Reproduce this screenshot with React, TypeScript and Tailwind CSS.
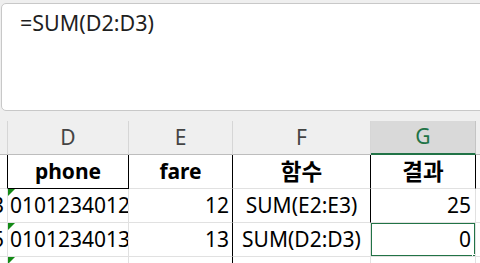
import React from "react";

const cellBase = "h-[34px] border-b border-r flex items-center shrink-0 overflow-hidden whitespace-nowrap";

function Tri() {
  return (
    <svg className="absolute left-0 top-0" width="7" height="7" viewBox="0 0 7 7">
      <polygon points="0,0 7,0 0,7" fill="#138a16" />
    </svg>
  );
}

export default function App() {
  return (
    <div className="w-[480px] h-[263px] overflow-hidden bg-[#efefef] relative font-['Noto_Sans','Noto_Sans_CJK_KR',sans-serif] text-black">
      <div className="pt-[3px] pl-[1px]">
        <div className="h-[108px] w-[540px] bg-white border border-[#c8c8c8] rounded-[5px] pl-[18px] pt-[5px] text-[21.5px] leading-[28px] text-[#1f1f1f]">
          =SUM(D2:D3)
        </div>
      </div>
      <div className="h-[10px]" />
      {/* column headers */}
      <div className="flex text-[21px] text-[#444]">
        <div className="w-[8px] h-[34px] border-r border-b border-r-[#d6d6d6] border-b-[#bdbdbd] shrink-0" />
        <div className="w-[121px] h-[34px] border-r border-b border-r-[#d6d6d6] border-b-[#bdbdbd] shrink-0 flex items-center justify-center">D</div>
        <div className="w-[104px] h-[34px] border-r border-b border-r-[#d6d6d6] border-b-[#bdbdbd] shrink-0 flex items-center justify-center">E</div>
        <div className="w-[138px] h-[34px] border-r border-b border-r-[#d6d6d6] border-b-[#bdbdbd] shrink-0 flex items-center justify-center">F</div>
        <div className="w-[105px] h-[34px] border-r border-b-2 border-r-[#c4c4c4] border-b-[#217346] bg-[#d9d9d9] shrink-0 flex items-center justify-center text-[#217346]">G</div>
        <div className="flex-1 h-[34px] border-b border-b-[#bdbdbd]" />
      </div>
      {/* row 1 */}
      <div className="flex text-[21px] bg-white">
        <div className={`${cellBase} w-[8px] border-r-black border-b-[#e1e1e1]`} />
        <div className={`${cellBase} w-[121px] border-r-black border-b-black justify-center font-bold`}>phone</div>
        <div className={`${cellBase} w-[104px] border-r-black border-b-[#e1e1e1] justify-center font-bold`}>fare</div>
        <div className={`${cellBase} w-[138px] border-r-black border-b-[#e1e1e1] justify-center font-bold text-[22.5px]`}>함수</div>
        <div className={`${cellBase} w-[105px] border-r-black border-b-[#e1e1e1] justify-center font-bold text-[22.5px]`}>결과</div>
        <div className={`${cellBase} flex-1 border-r-0 border-b-[#e1e1e1]`} />
      </div>
      {/* row 2 */}
      <div className="flex text-[21px] bg-white">
        <div className={`${cellBase} w-[8px] border-r-[#e1e1e1] border-b-[#e1e1e1] justify-end pr-[3px]`}>3</div>
        <div className={`${cellBase} w-[121px] border-r-[#e1e1e1] border-b-[#e1e1e1] pl-[2px] relative`}><Tri />0101234012</div>
        <div className={`${cellBase} w-[104px] border-r-black border-b-[#e1e1e1] justify-end pr-[3px]`}>12</div>
        <div className={`${cellBase} w-[138px] border-r-black border-b-[#e1e1e1] justify-center`}>SUM(E2:E3)</div>
        <div className={`${cellBase} w-[105px] border-r-[#e1e1e1] border-b-[#e1e1e1] justify-end pr-[4px]`}>25</div>
        <div className={`${cellBase} flex-1 border-r-0 border-b-[#e1e1e1]`} />
      </div>
      {/* row 3 */}
      <div className="flex text-[21px] bg-white">
        <div className={`${cellBase} w-[8px] border-r-[#e1e1e1] border-b-[#e1e1e1] justify-end pr-[3px]`}>5</div>
        <div className={`${cellBase} w-[121px] border-r-[#e1e1e1] border-b-[#e1e1e1] pl-[2px] relative`}><Tri />0101234013</div>
        <div className={`${cellBase} w-[104px] border-r-black border-b-[#e1e1e1] justify-end pr-[3px]`}>13</div>
        <div className={`${cellBase} w-[138px] border-r-[#e1e1e1] border-b-[#e1e1e1] justify-center`}>SUM(D2:D3)</div>
        <div className={`${cellBase} w-[105px] border-r-[#e1e1e1] border-b-[#e1e1e1] justify-end pr-[4px] relative`}>
          0
          <div className="absolute left-[-1px] top-[-1px] w-[106px] h-[35px] border-2 border-[#217346]" />
          <div className="absolute right-[-4px] bottom-[-5px] w-[7px] h-[7px] bg-[#217346] border border-white" />
        </div>
        <div className={`${cellBase} flex-1 border-r-0 border-b-[#e1e1e1]`} />
      </div>
      {/* row 4 */}
      <div className="flex text-[21px] bg-white">
        <div className={`${cellBase} w-[8px] border-r-[#e1e1e1] border-b-[#e1e1e1]`} />
        <div className={`${cellBase} w-[121px] border-r-[#e1e1e1] border-b-[#e1e1e1] relative`}><Tri /></div>
        <div className={`${cellBase} w-[104px] border-r-black border-b-[#e1e1e1]`} />
        <div className={`${cellBase} w-[138px] border-r-[#e1e1e1] border-b-[#e1e1e1]`} />
        <div className={`${cellBase} w-[105px] border-r-[#e1e1e1] border-b-[#e1e1e1]`} />
        <div className={`${cellBase} flex-1 border-r-0 border-b-[#e1e1e1]`} />
      </div>
    </div>
  );
}
